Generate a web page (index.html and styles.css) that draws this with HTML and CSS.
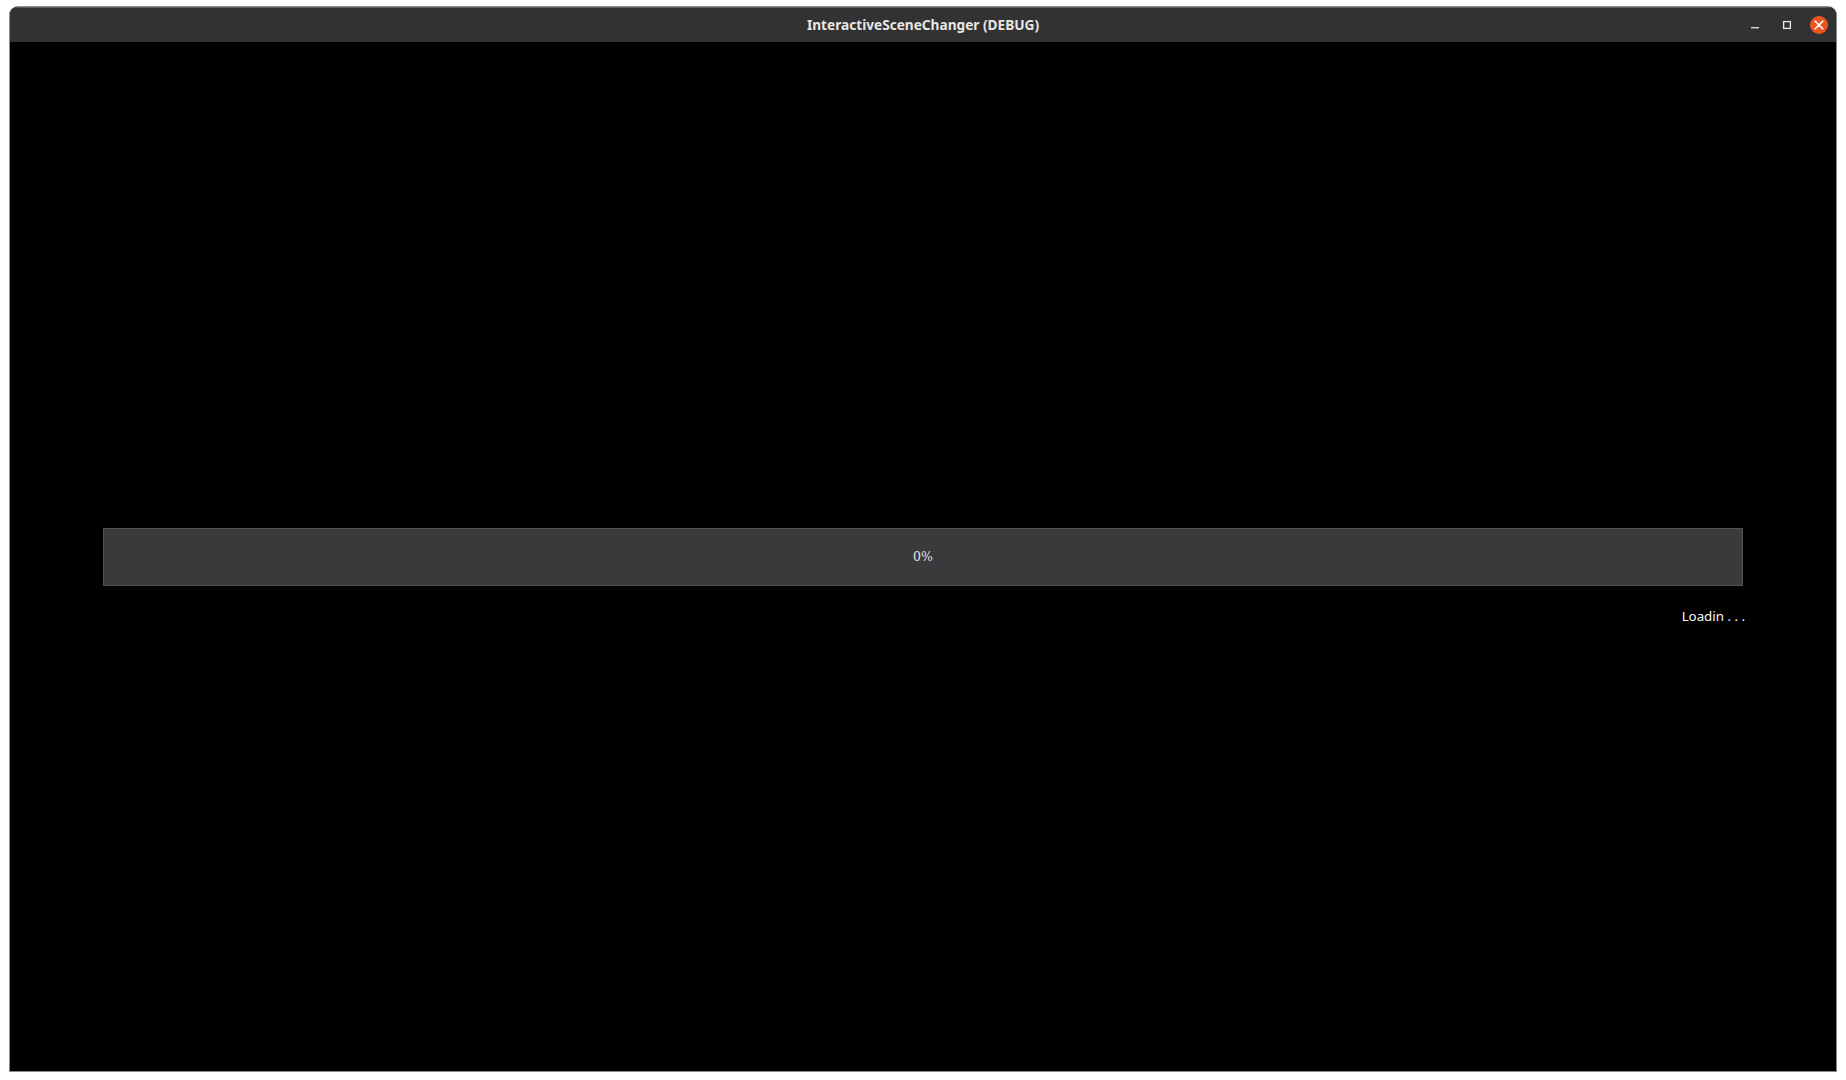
FILE: index.html
```html
<!DOCTYPE html>
<html lang="en">
<head>
<meta charset="utf-8">
<title>InteractiveSceneChanger (DEBUG)</title>
<link rel="stylesheet" href="styles.css">
</head>
<body>
<div class="window">
  <header class="titlebar">
    <div class="title">InteractiveSceneChanger (DEBUG)</div>
    <div class="controls">
      <button class="ctl" aria-label="Minimize"><svg width="10" height="10" viewBox="0 0 10 10"><rect x="1" y="7" width="8" height="1.4" fill="#d8d8d8"/></svg></button>
      <button class="ctl" aria-label="Maximize"><svg width="10" height="10" viewBox="0 0 10 10"><rect x="1.6" y="1.6" width="6.8" height="6.8" fill="none" stroke="#e6e6e6" stroke-width="1.3"/></svg></button>
      <button class="ctl close" aria-label="Close"><svg width="10" height="10" viewBox="0 0 10 10"><path d="M1.2 1.2L8.8 8.8M8.8 1.2L1.2 8.8" stroke="#fff" stroke-width="1.6" stroke-linecap="round"/></svg></button>
    </div>
  </header>
  <main class="content">
    <div class="progress"><span class="percent">0%</span></div>
    <div class="status">Loadin . . .</div>
  </main>
</div>
</body>
</html>
```
FILE: styles.css
```css
html, body {
  margin: 0;
  height: 100%;
  background: #fff;
}
body {
  padding: 7px 10px 9px 10px;
  box-sizing: border-box;
  height: 1080px;
  overflow: hidden;
}
.window {
  height: 100%;
  display: flex;
  flex-direction: column;
  background: #000;
  border-radius: 8px 8px 0 0;
  overflow: hidden;
  box-shadow: 0 0 0 1px #8a8a8a;
}
.titlebar {
  position: relative;
  flex: 0 0 35px;
  display: flex;
  align-items: center;
  justify-content: flex-end;
  background: #333232;
  border-top: 1px solid #5c5a5a;
  box-sizing: border-box;
}
.title {
  position: absolute;
  left: 0;
  right: 0;
  text-align: center;
  font: 700 13.65px/1 "Noto Sans", sans-serif;
  color: #e8e6e3;
}
.controls {
  display: flex;
  align-items: center;
  gap: 14px;
  padding-right: 8px;
}
.ctl {
  width: 18px;
  height: 18px;
  padding: 0;
  border: 0;
  border-radius: 50%;
  background: none;
  display: flex;
  align-items: center;
  justify-content: center;
}
.ctl.close {
  background: #e9541f;
}
.content {
  flex: 1;
  display: flex;
  flex-direction: column;
  padding: 486px 93px 0 93px;
}
.progress {
  height: 58px;
  box-sizing: border-box;
  display: flex;
  align-items: center;
  justify-content: center;
  background: #3a393c;
  border: 1px solid #525254;
}
.percent {
  font: 12.5px/1 "DejaVu Serif", serif;
  color: #e4e4e4;
}
.status {
  margin: 20px -2px 0 0;
  text-align: right;
  font: 13.3px/20px "Noto Sans", sans-serif;
  color: #f8f8f8;
}
```
